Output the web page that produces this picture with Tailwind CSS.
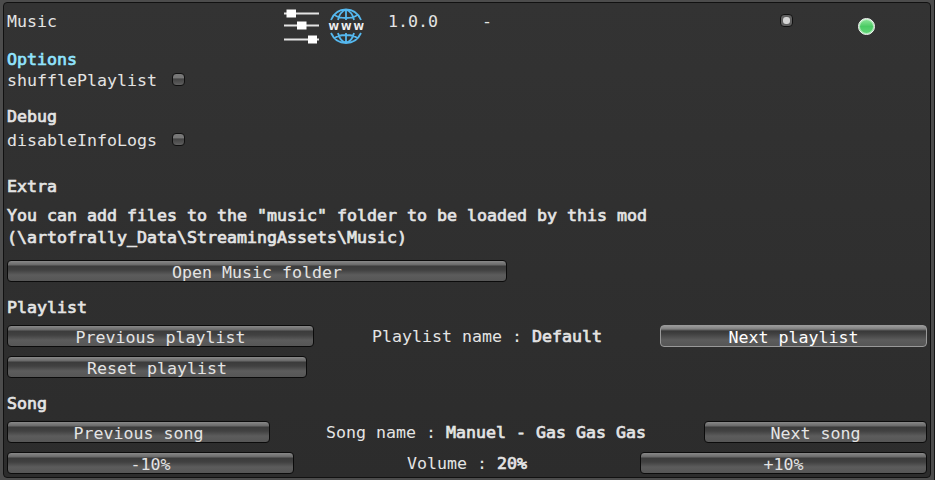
<!DOCTYPE html>
<html lang="en">
<head>
<meta charset="utf-8">
<title>Music</title>
<script src="https://cdn.jsdelivr.net/npm/@tailwindcss/browser@4"></script>
</head>
<body class="w-[935px] h-[480px] overflow-hidden bg-[#4c4c4c] border-r border-[#161616] pl-[3px] pt-[2px] pr-[3px] pb-[2px] font-['DejaVu_Sans_Mono',monospace] text-[16.61px] leading-[24px] text-[#e4e4e4]">
<main class="flex flex-col w-[928px] h-[476px] rounded-[4px] border border-[#111] bg-linear-to-b from-[#333] to-[#2c2c2c] px-[3px]">
  <header class="flex h-[45px] shrink-0">
    <div class="w-[277px] pt-[7px]">Music</div>
    <svg class="w-[35px] h-[35px] mt-[6px] shrink-0" viewBox="0 0 35 35" fill="#fff"><path d="M0 3.500h35v2H0zM0 15.500h35v2H0zM0 29.500h35v2H0z" fill="#e4e4e4"/><path d="M2.500 0.500h9.500v8H2.500zM13 12.500h9.500v8H13zM24 26.500h9v8H24z"/></svg>
    <svg class="w-[36px] h-[36px] ml-[9px] mt-[5px] shrink-0" viewBox="0 0 36 36" fill="none" stroke="#55b8ef" stroke-width="1.8"><path d="M3 12C6 5 12 1.500 18 1.500S30 5 33 12M3 25c3 6.500 9 10 15 10s12-3.500 15-10M18 1v11M18 25v10M10 12c1-5 4-9 8-10.500 4 1.500 7 5.500 8 10.500M10 25c1 5 4 8.500 8 10 4-1.500 7-5 8-10M6.500 6.500c2 2.500 5 3.500 11.500 3.500s9.500-1 11.500-3.500M6.500 30.500c2-2.500 5-3.500 11.500-3.500s9.500 1 11.500 3.500"/><text x="0.5 13 25.5" y="22" font-family="DejaVu Sans" font-weight="bold" font-size="9.5" fill="#f0f0f0" stroke="none">WWW</text></svg>
    <div class="w-[94px] ml-[24px] pt-[7px]">1.0.0</div>
    <div class="w-[298px] pt-[7px]">-</div>
    <div class="mt-[11px] flex size-[13px] items-center justify-center rounded-[4px] border border-[#111] bg-[#606060] shrink-0"><span class="size-[7px] rounded-[3px] bg-[#d4d4d4]"></span></div>
    <div class="ml-[65px] mt-[15px] size-[17px] shrink-0 rounded-full border border-white bg-linear-to-b from-[#8be69a] via-[#4acb64] to-[#62d878] shadow-[inset_0_0_0_1px_#ffffff80]"></div>
  </header>
  <section class="flex flex-col">
    <h2 class="h-[21px] [-webkit-text-stroke:0.7px] text-[#90e4ff]">Options</h2>
    <label class="flex h-[22px] items-center"><span class="mt-[2px]">shufflePlaylist</span><span class="ml-[15px] mb-px h-[13px] w-[13px] rounded-[4px] border border-[#111] bg-linear-to-b from-[#777] from-35% via-[#434343] via-45% to-[#606060]"></span></label>
  </section>
  <section class="mt-[14px] flex flex-col">
    <h2 class="h-[24px] [-webkit-text-stroke:0.7px]">Debug</h2>
    <label class="flex h-[22px] items-center"><span class="mt-[2px]">disableInfoLogs</span><span class="ml-[15px] mb-px h-[13px] w-[13px] rounded-[4px] border border-[#111] bg-linear-to-b from-[#777] from-35% via-[#434343] via-45% to-[#606060]"></span></label>
  </section>
  <section class="mt-[24px] flex flex-col">
    <h2 class="h-[22px] [-webkit-text-stroke:0.7px]">Extra</h2>
    <p class="mt-[7px] h-[44px] pt-px leading-[22px] whitespace-nowrap [-webkit-text-stroke:0.7px]">You can add files to the "music" folder to be loaded by this mod<br>(\artofrally_Data\StreamingAssets\Music)</p>
    <button class="mt-[12px] h-[22px] w-[500px] rounded-[4px] border border-[#0b0b0b] bg-[linear-gradient(#888_0,#686868_4px,#3b3b3b_5px,#414141_9px,#5c5c5c_14px,#565656_20px)] pt-[3px] leading-[17px]">Open Music folder</button>
  </section>
  <section class="mt-[14px] flex flex-col">
    <h2 class="h-[22px] [-webkit-text-stroke:0.7px]">Playlist</h2>
    <div class="mt-[7px] flex h-[22px] justify-between">
      <button class="w-[307px] rounded-[4px] border border-[#0b0b0b] bg-[linear-gradient(#888_0,#686868_4px,#3b3b3b_5px,#414141_9px,#5c5c5c_14px,#565656_20px)] pt-[3px] leading-[17px]">Previous playlist</button>
      <div>Playlist name : <b class="font-normal [-webkit-text-stroke:0.7px]">Default</b></div>
      <button class="w-[267px] rounded-[4px] border border-[#999] bg-[linear-gradient(#999_0,#808080_3px,#383838_5px,#414141_8px,#5c5c5c_14px,#565656_20px)] pt-[3px] leading-[17px] text-white">Next playlist</button>
    </div>
    <button class="mt-[9px] h-[22px] w-[300px] rounded-[4px] border border-[#0b0b0b] bg-[linear-gradient(#888_0,#686868_4px,#3b3b3b_5px,#414141_9px,#5c5c5c_14px,#565656_20px)] pt-[3px] leading-[17px]">Reset playlist</button>
  </section>
  <section class="mt-[14px] flex flex-col">
    <h2 class="h-[22px] [-webkit-text-stroke:0.7px]">Song</h2>
    <div class="mt-[7px] flex h-[22px] justify-between">
      <button class="w-[263px] rounded-[4px] border border-[#0b0b0b] bg-[linear-gradient(#888_0,#686868_4px,#3b3b3b_5px,#414141_9px,#5c5c5c_14px,#565656_20px)] pt-[3px] leading-[17px]">Previous song</button>
      <div class="pr-[2px]">Song name : <b class="font-normal [-webkit-text-stroke:0.7px]">Manuel - Gas Gas Gas</b></div>
      <button class="w-[223px] rounded-[4px] border border-[#0b0b0b] bg-[linear-gradient(#888_0,#686868_4px,#3b3b3b_5px,#414141_9px,#5c5c5c_14px,#565656_20px)] pt-[3px] leading-[17px]">Next song</button>
    </div>
    <div class="mt-[9px] flex h-[22px] justify-between">
      <button class="w-[287px] rounded-[4px] border border-[#0b0b0b] bg-[linear-gradient(#888_0,#686868_4px,#3b3b3b_5px,#414141_9px,#5c5c5c_14px,#565656_20px)] pt-[3px] leading-[17px]">-10%</button>
      <div>Volume : <b class="font-normal [-webkit-text-stroke:0.7px]">20%</b></div>
      <button class="w-[287px] rounded-[4px] border border-[#0b0b0b] bg-[linear-gradient(#888_0,#686868_4px,#3b3b3b_5px,#414141_9px,#5c5c5c_14px,#565656_20px)] pt-[3px] leading-[17px]">+10%</button>
    </div>
  </section>
</main>
</body>
</html>
